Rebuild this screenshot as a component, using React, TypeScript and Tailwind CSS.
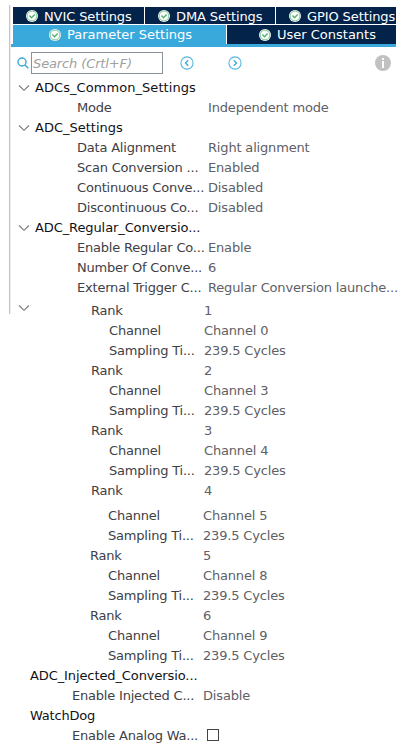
import React from "react";

function Check() {
  return (
    <svg width="12" height="12" viewBox="0 0 12 12" className="shrink-0">
      <circle cx="6" cy="6" r="6" fill="#fff" />
      <circle cx="6" cy="6" r="4.9" fill="#fff" stroke="#7cc592" strokeWidth="1" />
      <path d="M3.4 5.6 L5.5 7.7 L8.7 4.5" fill="none" stroke="#4db36c" strokeWidth="1.4" />
    </svg>
  );
}

function Tab({ label, className, textClass }: { label: string; className: string; textClass: string }) {
  return (
    <div className={"flex shrink-0 items-center text-white " + className}>
      <Check />
      <span className={"ml-[6px] " + textClass}>{label}</span>
    </div>
  );
}

function Chevron() {
  return (
    <svg width="12" height="8" viewBox="0 0 12 8" className="shrink-0">
      <path d="M1 1.5 L6 6.3 L11 1.5" fill="none" stroke="#777" strokeWidth="1.1" />
    </svg>
  );
}

function Arrow({ d }: { d: string }) {
  return (
    <svg width="14" height="14" viewBox="0 0 14 14" className="shrink-0">
      <circle cx="7" cy="7" r="6.1" fill="none" stroke="#55b5e2" strokeWidth="1.1" />
      <path d={d} fill="none" stroke="#3aa8dc" strokeWidth="1.3" />
    </svg>
  );
}

function Group({ label, textClass }: { label: string; textClass: string }) {
  return (
    <div className="ml-[7px] flex h-5 items-center pt-[2px] text-[#111115]">
      <Chevron />
      <span className={"ml-[5px] " + textClass}>{label}</span>
    </div>
  );
}

function Row({ label, value, labelClass }: { label: string; value: React.ReactNode; labelClass: string }) {
  return (
    <div className="flex h-5 items-center text-[#606066]">
      <span className={"shrink-0 pt-[2px] tracking-[-0.2px] text-[#404046] " + labelClass}>{label}</span>
      {typeof value === "string" ? <span className="pt-[2px] tracking-[-0.17px]">{value}</span> : value}
    </div>
  );
}

const settings = "ml-[66px] w-[131px]";
const upperRank = "ml-[91px] w-[113px]";
const upperItem = "ml-[109px] w-[95px]";
const lowerRank = "ml-[90px] w-[113px]";
const lowerItem = "ml-[108px] w-[95px]";
const footer = "ml-[72px] w-[131px]";
const sampling = "Sampling Ti...";
const cycles = "239.5 Cycles";

export default function App() {
  return (
    <div className="h-[754px] w-[401px] overflow-hidden bg-white pt-[5px] font-['DejaVu_Sans',sans-serif] text-[13px] leading-5 whitespace-nowrap">
      <section className="ml-[9px] flex h-[309px] border-l border-[#bec5cf]">
        <div className="w-px shrink-0 bg-[#eeeeee]" />
        <div className="w-[386px] shrink-0">
          <div className="ml-[2px] flex h-[19px] gap-px pt-[2px]">
            <Tab label="NVIC Settings" className="w-[131px] bg-[#03234b] pl-[13px]" textClass="pt-[2px] tracking-[-0.1px]" />
            <Tab label="DMA Settings" className="w-[130px] bg-[#03234b] pl-[13px]" textClass="pt-[2px] tracking-[-0.1px]" />
            <Tab label="GPIO Settings" className="w-[120px] bg-[#03234b] pl-[13px]" textClass="pt-[2px] tracking-[-0.1px]" />
          </div>
          <div className="ml-[2px] mt-px flex h-[19px] gap-px">
            <Tab label="Parameter Settings" className="w-[213px] bg-[#39a9dc] pl-[36px]" textClass="" />
            <Tab label="User Constants" className="w-[169px] bg-[#03234b] pl-[32px]" textClass="" />
          </div>
          <div className="h-[3px] w-[385px] bg-[#39a9dc]" />
          <div className="flex h-[30px] items-center pt-[2px]">
            <svg width="12" height="12" viewBox="0 0 12 12" className="ml-[6px] shrink-0">
              <circle cx="5" cy="5" r="4" fill="none" stroke="#39a9dc" strokeWidth="1.4" />
              <path d="M8 8 L11.3 11.3" stroke="#39a9dc" strokeWidth="1.5" />
            </svg>
            <div className="ml-[2px] flex h-[22px] w-[132px] items-center border border-[#8b929b] pt-[2px] pl-px tracking-[-0.12px] text-[#a0a0a0] italic">
              Search (Crtl+F)
            </div>
            <div className="ml-[17px] flex gap-[34px]">
              <Arrow d="M8.2 4.2 L5.5 7 L8.2 9.8" />
              <Arrow d="M5.8 4.2 L8.5 7 L5.8 9.8" />
            </div>
            <svg width="16" height="16" viewBox="0 0 16 16" className="ml-[133px] shrink-0">
              <circle cx="8" cy="8" r="8" fill="#c1c1c1" />
              <path d="M7 3h2v2H7zM7 6h2v7H7z" fill="#fff" />
            </svg>
          </div>
          <Group label="ADCs_Common_Settings" textClass="tracking-[0.06px]" />
          <Row label="Mode" value="Independent mode" labelClass={settings} />
          <Group label="ADC_Settings" textClass="tracking-normal" />
          <Row label="Data Alignment" value="Right alignment" labelClass={settings} />
          <Row label="Scan Conversion ..." value="Enabled" labelClass={settings} />
          <Row label="Continuous Conve..." value="Disabled" labelClass={settings} />
          <Row label="Discontinuous Co..." value="Disabled" labelClass={settings} />
          <Group label="ADC_Regular_Conversio..." textClass="tracking-[-0.1px]" />
          <Row label="Enable Regular Co..." value="Enable" labelClass={settings} />
          <Row label="Number Of Conve..." value="6" labelClass={settings} />
          <Row label="External Trigger C..." value="Regular Conversion launche..." labelClass={settings} />
          <div className="mt-[3px] flex h-5 items-center text-[#606066]">
            <div className="-mt-[4px] ml-[7px] flex w-[73px]"><Chevron /></div>
            <span className="w-[113px] pt-[2px] tracking-[-0.2px] text-[#404046]">Rank</span>
            <span className="pt-[2px]">1</span>
          </div>
        </div>
      </section>
      <section className="mt-[6px]">
        <Row label="Channel" value="Channel 0" labelClass={upperItem} />
        <Row label={sampling} value={cycles} labelClass={upperItem} />
        <Row label="Rank" value="2" labelClass={upperRank} />
        <Row label="Channel" value="Channel 3" labelClass={upperItem} />
        <Row label={sampling} value={cycles} labelClass={upperItem} />
        <Row label="Rank" value="3" labelClass={upperRank} />
        <Row label="Channel" value="Channel 4" labelClass={upperItem} />
        <Row label={sampling} value={cycles} labelClass={upperItem} />
        <Row label="Rank" value="4" labelClass={upperRank} />
      </section>
      <section className="mt-[5px]">
        <Row label="Channel" value="Channel 5" labelClass={lowerItem} />
        <Row label={sampling} value={cycles} labelClass={lowerItem} />
        <Row label="Rank" value="5" labelClass={lowerRank} />
        <Row label="Channel" value="Channel 8" labelClass={lowerItem} />
        <Row label={sampling} value={cycles} labelClass={lowerItem} />
        <Row label="Rank" value="6" labelClass={lowerRank} />
        <Row label="Channel" value="Channel 9" labelClass={lowerItem} />
        <Row label={sampling} value={cycles} labelClass={lowerItem} />
        <div className="ml-[30px] h-5 pt-px tracking-[-0.1px] text-[#111115]">ADC_Injected_Conversio...</div>
        <Row label="Enable Injected C..." value="Disable" labelClass={footer} />
        <div className="ml-[30px] h-5 pt-px tracking-[-0.2px] text-[#111115]">WatchDog</div>
        <Row
          label="Enable Analog Wa..."
          value={<span className="ml-[4px] size-3 border border-[#444]" />}
          labelClass={footer}
        />
      </section>
    </div>
  );
}
